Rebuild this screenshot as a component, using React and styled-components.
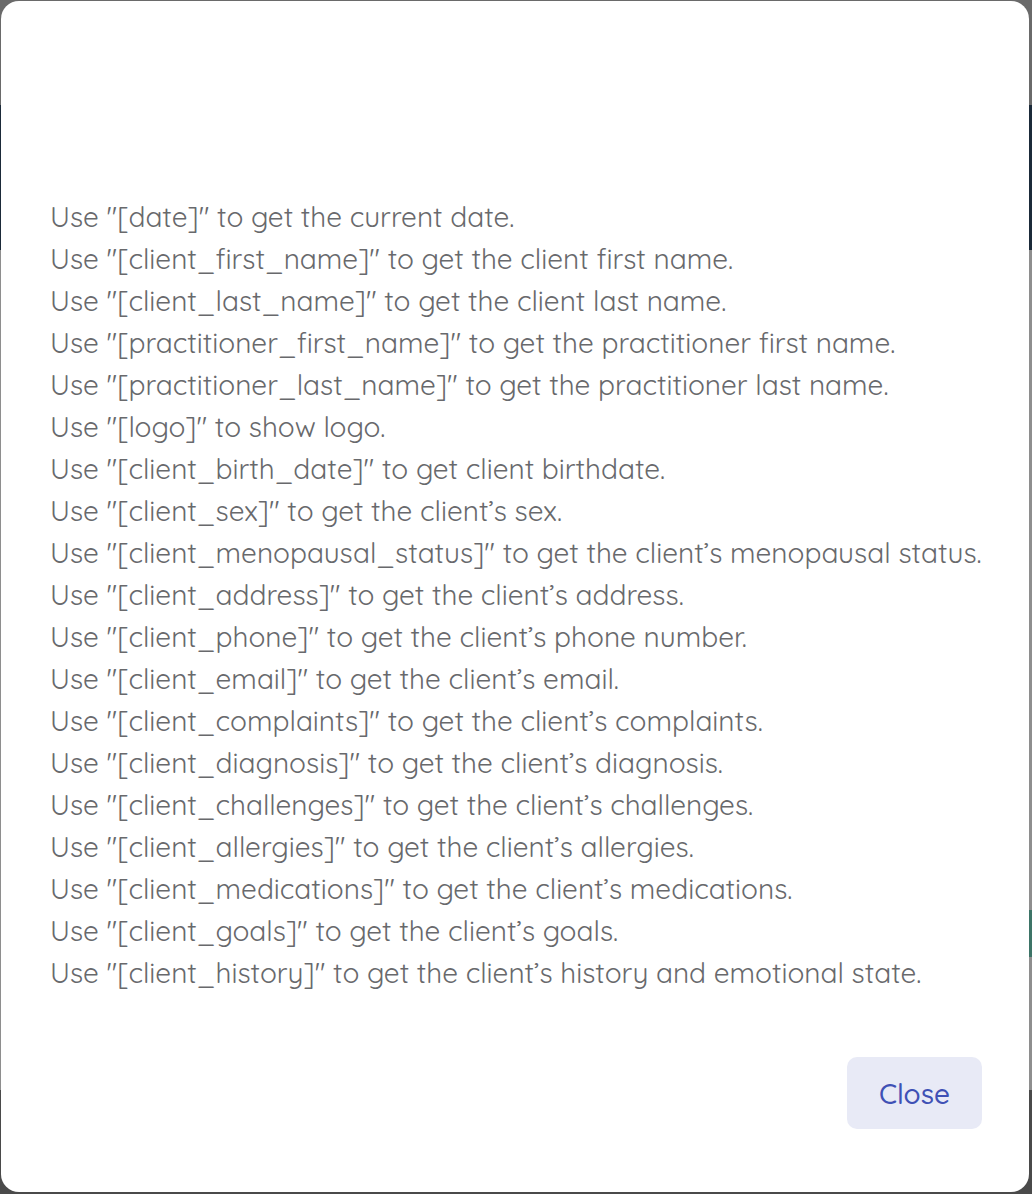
import React from "react";
import styled, { createGlobalStyle } from "styled-components";

const Global = createGlobalStyle`
  html, body { margin: 0; padding: 0; }
  body { font-family: "Quicksand", "Open Sans", "Lato", sans-serif; background: #8e8e8e; }
`;

const Page = styled.div`
  display: flex;
  flex-direction: column;
  height: 1194px;
  overflow: hidden;
`;

const Band = styled.div`
  height: ${(p) => p.$h}px;
  background: ${(p) => p.$bg};
  display: flex;
  justify-content: flex-end;
  flex: ${(p) => (p.$grow ? 1 : "none")};
`;

const SideBlock = styled.div`
  width: 40px;
  height: 47px;
  margin-top: ${(p) => p.$top}px;
  background: #3d7467;
`;

const Overlay = styled.div`
  position: fixed;
  inset: 0;
  display: flex;
  padding: 1px 3px 2px 1px;
  box-sizing: border-box;
`;

const Dialog = styled.div`
  flex: 1;
  background: #ffffff;
  border-radius: 18px;
  display: flex;
  flex-direction: column;
  padding: 195px 47px 63px 49px;
  box-sizing: border-box;
`;

const List = styled.div`
  display: flex;
  flex-direction: column;
  flex: 1;
`;

const Line = styled.div`
  font-size: 28px;
  font-weight: 400;
  line-height: 42px;
  color: #68696c;
  white-space: nowrap;
`;

const Footer = styled.div`
  display: flex;
  justify-content: flex-end;
`;

const CloseButton = styled.button`
  width: 135px;
  height: 72px;
  border: none;
  border-radius: 10px;
  background: #e8eaf6;
  color: #3f51b5;
  font-family: inherit;
  font-size: 28px;
  font-weight: 500;
  cursor: pointer;
`;

const items = [
  ["date", "to get the current date."],
  ["client_first_name", "to get the client first name."],
  ["client_last_name", "to get the client last name."],
  ["practitioner_first_name", "to get the practitioner first name."],
  ["practitioner_last_name", "to get the practitioner last name."],
  ["logo", "to show logo."],
  ["client_birth_date", "to get client birthdate."],
  ["client_sex", "to get the client\u2019s sex."],
  ["client_menopausal_status", "to get the client\u2019s menopausal status."],
  ["client_address", "to get the client\u2019s address."],
  ["client_phone", "to get the client\u2019s phone number."],
  ["client_email", "to get the client\u2019s email."],
  ["client_complaints", "to get the client\u2019s complaints."],
  ["client_diagnosis", "to get the client\u2019s diagnosis."],
  ["client_challenges", "to get the client\u2019s challenges."],
  ["client_allergies", "to get the client\u2019s allergies."],
  ["client_medications", "to get the client\u2019s medications."],
  ["client_goals", "to get the client\u2019s goals."],
  ["client_history", "to get the client\u2019s history and emotional state."],
];

export default function App() {
  return (
    <>
      <Global />
      <Page>
        <Band $h={105} $bg="#6a6a6a" />
        <Band $h={145} $bg="#1b2a39" />
        <Band $h={840} $bg="#8e8e8e">
          <SideBlock $top={660} />
        </Band>
        <Band $grow $bg="#4a4a4a" />
      </Page>
      <Overlay>
        <Dialog>
          <List>
            {items.map(([key, text]) => (
              <Line key={key}>
                Use {"\u2033"}[{key}]{"\u2033"} {text}
              </Line>
            ))}
          </List>
          <Footer>
            <CloseButton>Close</CloseButton>
          </Footer>
        </Dialog>
      </Overlay>
    </>
  );
}
